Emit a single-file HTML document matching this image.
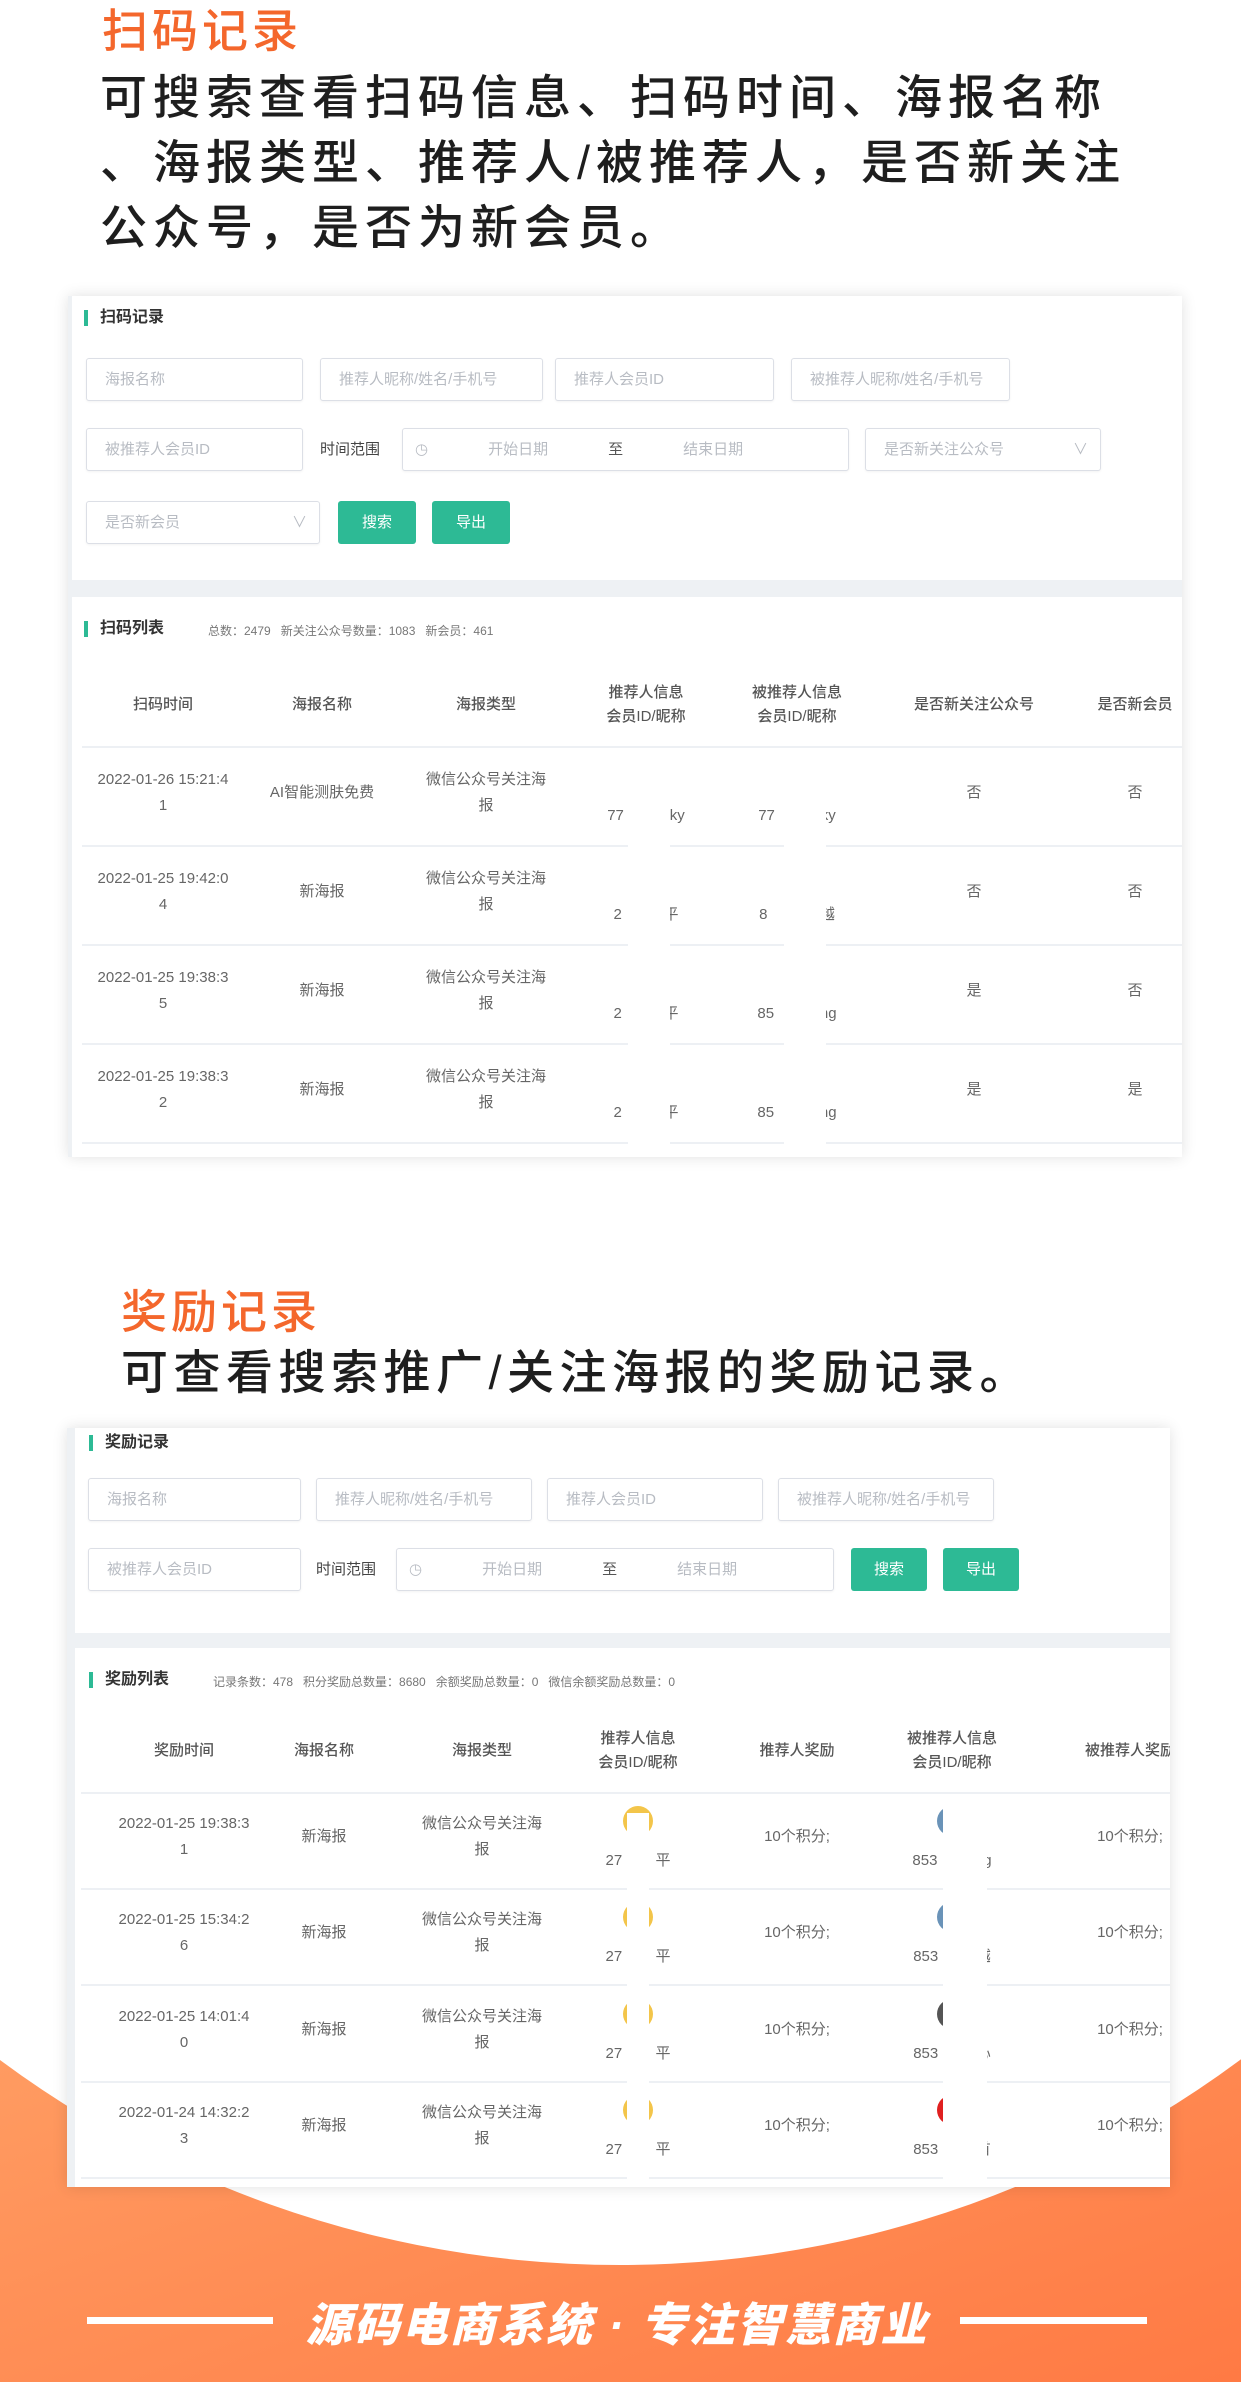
<!DOCTYPE html>
<html><head><meta charset="utf-8">
<style>
*{margin:0;padding:0;box-sizing:border-box}
body{width:1241px;height:2382px;position:relative;overflow:hidden;background:#fff;font-family:"Liberation Sans","Noto Sans CJK SC",sans-serif}
.a{position:absolute}
.h1{position:absolute;color:#f4672c;font-size:46px;letter-spacing:4px;font-weight:500}
.p{position:absolute;color:#1e1e1e;font-size:47px;letter-spacing:6px;line-height:65px;font-weight:500}
.panel{position:absolute;background:#fff}
.st{position:absolute;font-size:16px;font-weight:bold;color:#333;padding-left:12px;border-left:4px solid #2dba95;line-height:16px}
.stat{position:absolute;font-size:12px;color:#777;white-space:nowrap}
.in{position:absolute;border:1px solid #dcdfe6;border-radius:3px;background:#fff;color:#b8bcc3;font-size:15px;line-height:41px;padding-left:18px;white-space:nowrap;box-shadow:0 1px 2px rgba(0,0,0,.05)}
.lbl{position:absolute;font-size:15px;color:#444}
.btn{position:absolute;background:#2dba95;color:#fff;font-size:15px;border-radius:3px;text-align:center;line-height:43px}
.c{position:absolute;width:170px;margin-left:-85px;text-align:center;font-size:15px;color:#666;line-height:26px}
.hd{position:absolute;width:170px;margin-left:-85px;text-align:center;font-size:15px;color:#555;line-height:24px;font-weight:500}
.line{position:absolute;height:2px;background:#edf0f4}
.av{position:absolute;width:30px;height:30px;border-radius:50%}
.strip{position:absolute;background:#fff;width:42px}
</style></head><body>

<div class="a" style="left:0;top:2040px;width:1241px;height:342px;background:linear-gradient(160deg,#ff9c62,#ff7a44);"></div>
<div class="a" style="left:-420px;top:185px;width:2080px;height:2080px;border-radius:50%;background:#fff;"></div>

<div class="h1" style="left:102px;top:-5px;">扫码记录</div>
<div class="p" style="left:100px;top:65px;">可搜索查看扫码信息、扫码时间、海报名称<br>、海报类型、推荐人/被推荐人，是否新关注<br>公众号，是否为新会员。</div>

<div class="a" style="left:68px;top:296px;width:1114px;height:861px;background:#eef1f4;box-shadow:0 0 14px rgba(0,0,0,.12);overflow:hidden">
 <div class="panel" style="left:4px;top:0;width:1110px;height:284px">
  <div class="st" style="left:12px;top:14px;">扫码记录</div>
  <div class="in" style="left:14px;top:62px;width:217px;height:43px">海报名称</div>
  <div class="in" style="left:248px;top:62px;width:223px;height:43px">推荐人昵称/姓名/手机号</div>
  <div class="in" style="left:483px;top:62px;width:219px;height:43px">推荐人会员ID</div>
  <div class="in" style="left:719px;top:62px;width:219px;height:43px">被推荐人昵称/姓名/手机号</div>
  <div class="in" style="left:14px;top:132px;width:217px;height:43px">被推荐人会员ID</div>
  <div class="lbl" style="left:248px;top:142px;">时间范围</div>
  <div class="in" style="left:330px;top:132px;width:447px;height:43px;padding-left:12px">◷<span style="margin-left:60px">开始日期</span><span style="margin-left:60px;color:#555">至</span><span style="margin-left:60px">结束日期</span></div>
  <div class="in" style="left:793px;top:132px;width:236px;height:43px">是否新关注公众号<span style="position:absolute;right:12px">∨</span></div>
  <div class="in" style="left:14px;top:205px;width:234px;height:43px">是否新会员<span style="position:absolute;right:12px">∨</span></div>
  <div class="btn" style="left:266px;top:205px;width:78px;height:43px">搜索</div>
  <div class="btn" style="left:360px;top:205px;width:78px;height:43px">导出</div>
 </div>
 <div class="panel" style="left:4px;top:301px;width:1110px;height:570px">
  <div class="st" style="left:12px;top:24px;">扫码列表</div>
  <div class="stat" style="left:136px;top:25px;">总数：2479&nbsp;&nbsp;&nbsp;新关注公众号数量：1083&nbsp;&nbsp;&nbsp;新会员：461</div>
  <div class="hd" style="left:91px;top:96px">扫码时间</div>
  <div class="hd" style="left:250px;top:96px">海报名称</div>
  <div class="hd" style="left:414px;top:96px">海报类型</div>
  <div class="hd" style="left:574px;top:84px">推荐人信息<br>会员ID/昵称</div>
  <div class="hd" style="left:725px;top:84px">被推荐人信息<br>会员ID/昵称</div>
  <div class="hd" style="left:902px;top:96px">是否新关注公众号</div>
  <div class="hd" style="left:1063px;top:96px">是否新会员</div>
  <div class="line" style="left:10px;top:149px;width:1100px"></div>
  <div class="c" style="left:91px;top:170px">2022-01-26 15:21:4<br>1</div>
  <div class="c" style="left:250px;top:183px">AI智能测肤免费</div>
  <div class="c" style="left:414px;top:170px">微信公众号关注海<br>报</div>
  <div class="c" style="left:574px;top:206px">77&nbsp;&nbsp;&nbsp;&nbsp;&nbsp;&nbsp;&nbsp;&nbsp;&nbsp;nky</div>
  <div class="c" style="left:725px;top:206px">77&nbsp;&nbsp;&nbsp;&nbsp;&nbsp;&nbsp;&nbsp;&nbsp;&nbsp;nky</div>
  <div class="c" style="left:902px;top:183px">否</div>
  <div class="c" style="left:1063px;top:183px">否</div>
  <div class="line" style="left:10px;top:248px;width:1100px"></div>
  <div class="c" style="left:91px;top:269px">2022-01-25 19:42:0<br>4</div>
  <div class="c" style="left:250px;top:282px">新海报</div>
  <div class="c" style="left:414px;top:269px">微信公众号关注海<br>报</div>
  <div class="c" style="left:574px;top:305px">2&nbsp;&nbsp;&nbsp;&nbsp;&nbsp;&nbsp;&nbsp;&nbsp;&nbsp;&nbsp;平</div>
  <div class="c" style="left:725px;top:305px">8&nbsp;&nbsp;&nbsp;&nbsp;&nbsp;&nbsp;&nbsp;&nbsp;&nbsp;楚越</div>
  <div class="c" style="left:902px;top:282px">否</div>
  <div class="c" style="left:1063px;top:282px">否</div>
  <div class="line" style="left:10px;top:347px;width:1100px"></div>
  <div class="c" style="left:91px;top:368px">2022-01-25 19:38:3<br>5</div>
  <div class="c" style="left:250px;top:381px">新海报</div>
  <div class="c" style="left:414px;top:368px">微信公众号关注海<br>报</div>
  <div class="c" style="left:574px;top:404px">2&nbsp;&nbsp;&nbsp;&nbsp;&nbsp;&nbsp;&nbsp;&nbsp;&nbsp;&nbsp;平</div>
  <div class="c" style="left:725px;top:404px">85&nbsp;&nbsp;&nbsp;&nbsp;&nbsp;&nbsp;&nbsp;&nbsp;.ong</div>
  <div class="c" style="left:902px;top:381px">是</div>
  <div class="c" style="left:1063px;top:381px">否</div>
  <div class="line" style="left:10px;top:446px;width:1100px"></div>
  <div class="c" style="left:91px;top:467px">2022-01-25 19:38:3<br>2</div>
  <div class="c" style="left:250px;top:480px">新海报</div>
  <div class="c" style="left:414px;top:467px">微信公众号关注海<br>报</div>
  <div class="c" style="left:574px;top:503px">2&nbsp;&nbsp;&nbsp;&nbsp;&nbsp;&nbsp;&nbsp;&nbsp;&nbsp;&nbsp;平</div>
  <div class="c" style="left:725px;top:503px">85&nbsp;&nbsp;&nbsp;&nbsp;&nbsp;&nbsp;&nbsp;&nbsp;.ong</div>
  <div class="c" style="left:902px;top:480px">是</div>
  <div class="c" style="left:1063px;top:480px">是</div>
  <div class="line" style="left:10px;top:545px;width:1100px"></div>
  <div class="av" style="left:561px;top:553px;background:#f3c54a"></div>
  <div class="av" style="left:716px;top:553px;background:#8fb8df"></div>
  <div class="strip" style="left:556px;top:160px;height:420px"></div>
  <div class="strip" style="left:712px;top:160px;height:420px"></div>
 </div>
</div>

<div class="h1" style="left:121px;top:1276px;">奖励记录</div>
<div class="p" style="left:121px;top:1340px;letter-spacing:5.5px">可查看搜索推广/关注海报的奖励记录。</div>

<div class="a" style="left:67px;top:1428px;width:1103px;height:759px;background:#eef1f4;box-shadow:0 0 14px rgba(0,0,0,.12);overflow:hidden">
 <div class="panel" style="left:8px;top:0;width:1095px;height:205px">
  <div class="st" style="left:14px;top:7px;">奖励记录</div>
  <div class="in" style="left:13px;top:50px;width:213px;height:43px">海报名称</div>
  <div class="in" style="left:241px;top:50px;width:216px;height:43px">推荐人昵称/姓名/手机号</div>
  <div class="in" style="left:472px;top:50px;width:216px;height:43px">推荐人会员ID</div>
  <div class="in" style="left:703px;top:50px;width:216px;height:43px">被推荐人昵称/姓名/手机号</div>
  <div class="in" style="left:13px;top:120px;width:213px;height:43px">被推荐人会员ID</div>
  <div class="lbl" style="left:241px;top:130px;">时间范围</div>
  <div class="in" style="left:321px;top:120px;width:438px;height:43px;padding-left:12px">◷<span style="margin-left:60px">开始日期</span><span style="margin-left:60px;color:#555">至</span><span style="margin-left:60px">结束日期</span></div>
  <div class="btn" style="left:776px;top:120px;width:76px;height:43px">搜索</div>
  <div class="btn" style="left:868px;top:120px;width:76px;height:43px">导出</div>
 </div>
 <div class="panel" style="left:8px;top:220px;width:1095px;height:560px">
  <div class="st" style="left:14px;top:24px;">奖励列表</div>
  <div class="stat" style="left:138px;top:25px;">记录条数：478&nbsp;&nbsp;&nbsp;积分奖励总数量：8680&nbsp;&nbsp;&nbsp;余额奖励总数量：0&nbsp;&nbsp;&nbsp;微信余额奖励总数量：0</div>
  <div class="hd" style="left:109px;top:91px">奖励时间</div>
  <div class="hd" style="left:249px;top:91px">海报名称</div>
  <div class="hd" style="left:407px;top:91px">海报类型</div>
  <div class="hd" style="left:563px;top:79px">推荐人信息<br>会员ID/昵称</div>
  <div class="hd" style="left:722px;top:91px">推荐人奖励</div>
  <div class="hd" style="left:877px;top:79px">被推荐人信息<br>会员ID/昵称</div>
  <div class="hd" style="left:1055px;top:91px">被推荐人奖励</div>
  <div class="line" style="left:6px;top:144px;width:1090px"></div>

  <div class="c" style="left:109px;top:163px">2022-01-25 19:38:3<br>1</div>
  <div class="c" style="left:249px;top:176px">新海报</div>
  <div class="c" style="left:407px;top:163px">微信公众号关注海<br>报</div>
  <div class="av" style="left:548px;top:158px;background:#f3c54a"></div>
  <div class="c" style="left:563px;top:200px">27&nbsp;&nbsp;&nbsp;&nbsp;&nbsp;&nbsp;&nbsp;&nbsp;平</div>
  <div class="c" style="left:722px;top:176px">10个积分;</div>
  <div class="av" style="left:862px;top:158px;background:#6a93b8"></div>
  <div class="c" style="left:877px;top:200px">853&nbsp;&nbsp;&nbsp;&nbsp;&nbsp;&nbsp;&nbsp;&nbsp;&nbsp;ng</div>
  <div class="c" style="left:1055px;top:176px">10个积分;</div>
  <div class="line" style="left:6px;top:240px;width:1090px"></div>

  <div class="c" style="left:109px;top:259px">2022-01-25 15:34:2<br>6</div>
  <div class="c" style="left:249px;top:272px">新海报</div>
  <div class="c" style="left:407px;top:259px">微信公众号关注海<br>报</div>
  <div class="av" style="left:548px;top:254px;background:#f3c54a"></div>
  <div class="c" style="left:563px;top:296px">27&nbsp;&nbsp;&nbsp;&nbsp;&nbsp;&nbsp;&nbsp;&nbsp;平</div>
  <div class="c" style="left:722px;top:272px">10个积分;</div>
  <div class="av" style="left:862px;top:254px;background:#6a93b8"></div>
  <div class="c" style="left:877px;top:296px">853&nbsp;&nbsp;&nbsp;&nbsp;&nbsp;&nbsp;&nbsp;&nbsp;&nbsp;越</div>
  <div class="c" style="left:1055px;top:272px">10个积分;</div>
  <div class="line" style="left:6px;top:336px;width:1090px"></div>

  <div class="c" style="left:109px;top:356px">2022-01-25 14:01:4<br>0</div>
  <div class="c" style="left:249px;top:369px">新海报</div>
  <div class="c" style="left:407px;top:356px">微信公众号关注海<br>报</div>
  <div class="av" style="left:548px;top:351px;background:#f3c54a"></div>
  <div class="c" style="left:563px;top:393px">27&nbsp;&nbsp;&nbsp;&nbsp;&nbsp;&nbsp;&nbsp;&nbsp;平</div>
  <div class="c" style="left:722px;top:369px">10个积分;</div>
  <div class="av" style="left:862px;top:351px;background:#555"></div>
  <div class="c" style="left:877px;top:393px">853&nbsp;&nbsp;&nbsp;&nbsp;&nbsp;&nbsp;&nbsp;&nbsp;&nbsp;心</div>
  <div class="c" style="left:1055px;top:369px">10个积分;</div>
  <div class="line" style="left:6px;top:433px;width:1090px"></div>

  <div class="c" style="left:109px;top:452px">2022-01-24 14:32:2<br>3</div>
  <div class="c" style="left:249px;top:465px">新海报</div>
  <div class="c" style="left:407px;top:452px">微信公众号关注海<br>报</div>
  <div class="av" style="left:548px;top:447px;background:#f3c54a"></div>
  <div class="c" style="left:563px;top:489px">27&nbsp;&nbsp;&nbsp;&nbsp;&nbsp;&nbsp;&nbsp;&nbsp;平</div>
  <div class="c" style="left:722px;top:465px">10个积分;</div>
  <div class="av" style="left:862px;top:447px;background:#e02020"></div>
  <div class="c" style="left:877px;top:489px">853&nbsp;&nbsp;&nbsp;&nbsp;&nbsp;&nbsp;&nbsp;&nbsp;&nbsp;首</div>
  <div class="c" style="left:1055px;top:465px">10个积分;</div>
  <div class="line" style="left:6px;top:529px;width:1090px"></div>

  <div class="strip" style="left:552px;top:165px;height:400px;width:22px"></div>
  <div class="strip" style="left:868px;top:155px;height:400px;width:44px"></div>
 </div>
</div>

<div class="a" style="left:87px;top:2317px;width:186px;height:7px;background:#fff"></div>
<div class="a" style="left:960px;top:2317px;width:187px;height:7px;background:#fff"></div>
<div class="a" style="left:280px;top:2289px;width:674px;text-align:center;color:#fff;font-size:46px;font-weight:900;font-style:italic;letter-spacing:2px;white-space:nowrap">源码电商系统 · 专注智慧商业</div>
</body></html>
